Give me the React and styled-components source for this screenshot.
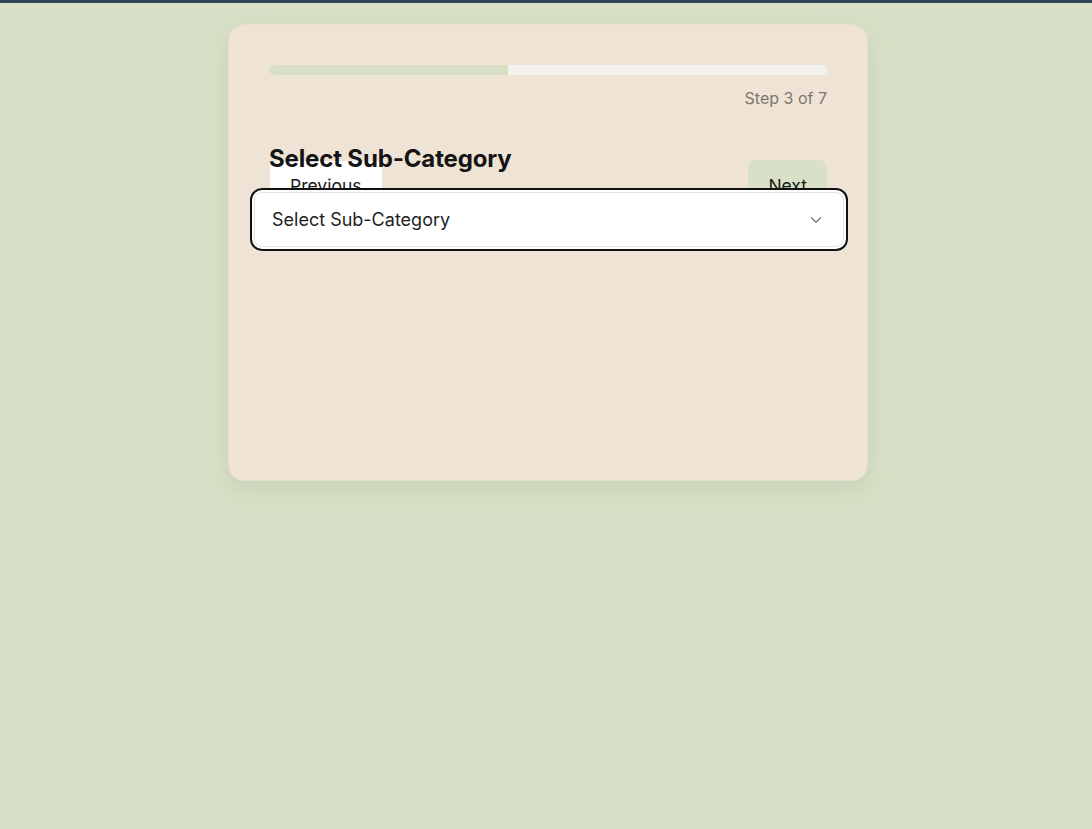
import React from "react";
import styled, { createGlobalStyle } from "styled-components";

const Global = createGlobalStyle`
  html, body {
    margin: 0;
    padding: 0;
    background: #d8e1c7;
    font-family: "Inter", "Liberation Sans", sans-serif;
    color: #1a1a1a;
  }
`;

const TopBar = styled.div`
  height: 3px;
  background: #2f4453;
`;

const Page = styled.div`
  min-height: 826px;
  display: flex;
  justify-content: center;
  align-items: flex-start;
  padding: 21px 0 0 4px;
  box-sizing: border-box;
`;

const Card = styled.div`
  width: 640px;
  height: 457px;
  box-sizing: border-box;
  padding: 40px 40px;
  background: #efe3d5;
  border: 1px solid #e6dfd4;
  border-radius: 16px;
  box-shadow: 0 8px 24px rgba(120, 135, 100, 0.18);
`;

const Track = styled.div`
  height: 10px;
  border-radius: 5px;
  background: #f3f2ef;
  overflow: hidden;
`;

const Fill = styled.div`
  height: 100%;
  background: #d7e0c6;
`;

const StepText = styled.div`
  margin-top: 13px;
  text-align: right;
  font-size: 16px;
  line-height: 20px;
  color: #7b7670;
`;

const Title = styled.h2`
  position: relative;
  z-index: 2;
  margin: 37px 0 0;
  font-size: 24px;
  line-height: 28px;
  font-weight: 700;
  letter-spacing: -0.15px;
  color: #141414;
`;

const Nav = styled.div`
  position: relative;
  z-index: 1;
  display: flex;
  justify-content: space-between;
  margin-top: -12px;
  padding-left: 1px;
`;

const NavButton = styled.button`
  font-family: inherit;
  font-size: 17.5px;
  line-height: 24px;
  color: #1a1a1a;
  border: none;
  padding: 13px 20px 12px;
  border-radius: ${(p) => (p.primary ? "8px" : "0")};
  background: ${(p) => (p.primary ? "#d8e1c7" : "#ffffff")};
  margin-top: ${(p) => (p.primary ? "-1px" : "0")};
`;

const SelectRing = styled.div`
  position: relative;
  z-index: 3;
  margin: -22px -21px 0 -19px;
  padding: 2px;
  background: #ffffff;
  border: 2.5px solid #111111;
  border-radius: 12px;
`;

const SelectBox = styled.div`
  height: 55px;
  box-sizing: border-box;
  display: flex;
  align-items: center;
  justify-content: space-between;
  padding: 0 18px 0 17px;
  border: 1px solid #e4e4e4;
  border-radius: 8px;
  font-size: 18px;
  color: #1f1f1f;
`;

const Chevron = () => (
  <svg width="18" height="18" viewBox="0 0 24 24" fill="none" stroke="#7a7a7a" strokeWidth="1.8" strokeLinecap="round" strokeLinejoin="round">
    <path d="M6 9l6 6 6-6" />
  </svg>
);

export default function App() {
  const step = 3;
  const total = 7;
  return (
    <>
      <Global />
      <TopBar />
      <Page>
        <Card>
          <Track>
            <Fill style={{ width: `${(step / total) * 100}%` }} />
          </Track>
          <StepText>
            Step {step} of {total}
          </StepText>
          <Title>Select Sub-Category</Title>
          <Nav>
            <NavButton>Previous</NavButton>
            <NavButton primary>Next</NavButton>
          </Nav>
          <SelectRing>
            <SelectBox>
              <span>Select Sub-Category</span>
              <Chevron />
            </SelectBox>
          </SelectRing>
        </Card>
      </Page>
    </>
  );
}
